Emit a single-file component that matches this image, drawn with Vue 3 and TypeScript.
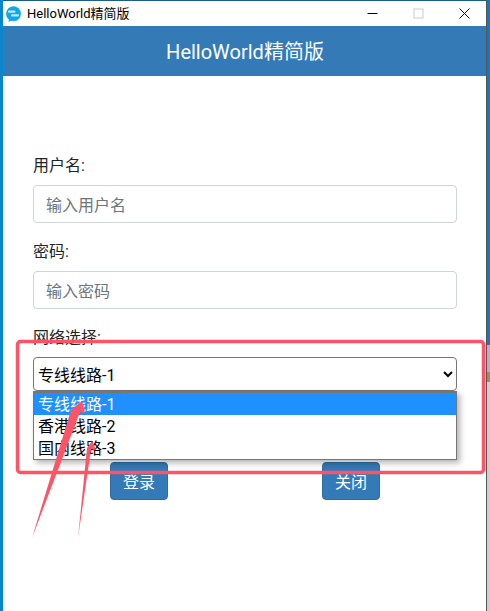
<script setup lang="ts">
const lines = ['专线线路-1', '香港线路-2', '国内线路-3']
const edgeStrip = [
  { color: '#0b7cc4', size: 45 },
  { color: '#c3a7cf', size: 27 },
  { color: '#b0884f', size: 10 },
  { color: '#cfcfcf', size: 229 },
]
</script>

<template>
  <div class="screen">
    <div class="edge-left"></div>

    <main class="window">
      <!-- Titelleiste -->
      <div class="titlebar">
        <svg class="app-icon" width="15" height="16" viewBox="0 0 15 16">
          <circle cx="7.5" cy="7.7" r="7.4" fill="#12a5e8" />
          <path d="M3 13l-.5 3 3.5-2z" fill="#12a5e8" />
          <rect x="2" y="4.4" width="7.5" height="2.4" rx="1" fill="#bfe9fa" />
          <rect x="5" y="8.2" width="8" height="2.4" rx="1" fill="#bfe9fa" />
        </svg>
        <span class="app-name">HelloWorld精简版</span>
        <div class="win-controls">
          <span class="win-btn">
            <svg width="11" height="11" viewBox="0 0 11 11"><path d="M0.5 5.5h10" stroke="#000" stroke-width="1" /></svg>
          </span>
          <span class="win-btn">
            <svg width="11" height="11" viewBox="0 0 11 11"><rect x="1" y="1" width="9" height="9" fill="none" stroke="#cbcbcb" /></svg>
          </span>
          <span class="win-btn">
            <svg width="11" height="11" viewBox="0 0 11 11"><path d="M0.5 0.5l10 10M10.5 0.5l-10 10" stroke="#111" stroke-width="1" /></svg>
          </span>
        </div>
      </div>

      <header class="banner">HelloWorld精简版</header>

      <form class="form" @submit.prevent>
        <div class="form-row">
          <label for="user">用户名:</label>
          <input id="user" type="text" placeholder="输入用户名" />
        </div>
        <div class="form-row">
          <label for="pass">密码:</label>
          <input id="pass" type="password" placeholder="输入密码" />
        </div>
        <div class="form-row">
          <label for="line">网络选择:</label>
          <div class="select-wrap">
            <select id="line">
              <option v-for="line in lines" :key="line">{{ line }}</option>
            </select>
            <!-- aufgeklappte Liste -->
            <ul class="menu">
              <li v-for="(line, i) in lines" :key="line" :class="{ active: i === 0 }">{{ line }}</li>
            </ul>
          </div>
        </div>
        <div class="actions">
          <button type="submit">登录</button>
          <button type="button">关闭</button>
        </div>
      </form>
    </main>

    <div class="edge-right">
      <div
        v-for="seg in edgeStrip"
        :key="seg.color"
        :style="{ background: seg.color, height: seg.size + 'px' }"
      ></div>
    </div>

    <!-- Markierungen aus dem Screenshot -->
    <svg class="marks" width="490" height="611" viewBox="0 0 490 611">
      <rect x="17.5" y="341.5" width="466" height="131" rx="3" fill="none" stroke="#fd5468" stroke-width="3.5" />
      <polygon points="82,401 85,413 80,412 32,538 71,410" fill="#fd5468" />
      <polygon points="92,441 96,450 91,449 78,538 87,448" fill="#fd5468" />
    </svg>
  </div>
</template>

<style scoped>
.screen {
  position: relative;
  display: flex;
  width: 490px;
  height: 611px;
  overflow: hidden;
  font-family: Roboto, "Noto Sans CJK SC", sans-serif;
  background: #fff;
}

.edge-left {
  width: 3px;
  background: #0b86cc;
}

.edge-right {
  width: 3px;
  display: flex;
  flex-direction: column;
  background: #0b7cc4;
  padding-top: 300px;
  border-left: 1px solid #555;
  margin-left: -1px;
}

.window {
  flex: 1;
  display: flex;
  flex-direction: column;
  border-top: 1px solid #1a5f8c;
  background: #fff;
}

.titlebar {
  height: 25px;
  display: flex;
  align-items: center;
  padding-left: 3px;
  background: #fff;
}

.app-icon {
  flex: none;
}

.app-name {
  margin-left: 6px;
  margin-bottom: 3px;
  font-size: 13px;
  color: #000;
}

.win-controls {
  margin-left: auto;
  display: flex;
}

.win-btn {
  width: 46px;
  height: 25px;
  display: flex;
  align-items: center;
  justify-content: center;
}

.banner {
  box-sizing: border-box;
  height: 50px;
  padding-bottom: 2px;
  display: flex;
  align-items: center;
  justify-content: center;
  background: #337ab7;
  color: #fff;
  font-size: 20px;
}

.form {
  padding: 77px 30px 0;
}

.form-row {
  margin-bottom: 16px;
}

label {
  display: block;
  margin-bottom: 8px;
  padding-top: 2px;
  font-size: 16px;
  line-height: 22px;
  color: #212529;
}

input {
  display: block;
  box-sizing: border-box;
  width: 100%;
  height: 38px;
  padding: 7px 12px 5px;
  border: 1px solid #ced4da;
  border-radius: 4px;
  font: inherit;
  font-size: 16px;
  color: #495057;
}

input::placeholder {
  color: #6c757d;
}

.select-wrap {
  position: relative;
}

select {
  display: block;
  width: 100%;
  height: 34px;
  padding: 2px 0 0;
  border: 1px solid #767676;
  border-radius: 4px;
  background: #fff;
  font: inherit;
  font-size: 16px;
  color: #000;
}

.menu {
  position: absolute;
  top: 34px;
  left: 0;
  right: 0;
  margin: 0;
  padding: 0;
  list-style: none;
  box-sizing: border-box;
  height: 69px;
  border: 1px solid #767676;
  border-top-width: 2px;
  background: #fff;
  box-shadow: 3px 3px 6px rgba(0, 0, 0, 0.3);
  font-size: 16px;
  color: #000;
}

.menu li {
  height: 22px;
  line-height: 24px;
  padding-left: 4px;
}

.menu li.active {
  background: #1e90ff;
  color: #fff;
}

.actions {
  display: flex;
  justify-content: space-between;
  padding: 55px 77px 0;
}

button {
  width: 58px;
  height: 38px;
  border: 1px solid #2e6da4;
  border-radius: 4px;
  background: #337ab7;
  color: #fff;
  font: inherit;
  font-size: 16px;
}

.marks {
  position: absolute;
  top: 0;
  left: 0;
  pointer-events: none;
}
</style>

<style>
html,
body {
  margin: 0;
  background: #fff;
}
</style>
